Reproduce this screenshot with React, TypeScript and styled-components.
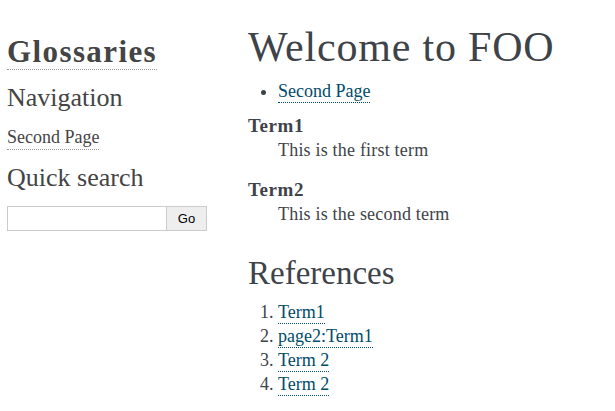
import React from "react";
import styled, { createGlobalStyle } from "styled-components";

const Global = createGlobalStyle`
  html, body { margin: 0; padding: 0; background: #fff; }
  body {
    font-family: "Liberation Serif", "Times New Roman", serif;
    color: #3E4349;
    font-size: 18px;
  }
`;

const Page = styled.div`
  display: grid;
  grid-template-columns: 241px 1fr;
  padding: 0 8px 0 7px;
`;

const Sidebar = styled.aside`
  display: flex;
  flex-direction: column;
  align-items: flex-start;
  padding-top: 35px;
`;

const LogoTitle = styled.h1`
  margin: 0;
  font-size: 31px;
  line-height: 34px;
  letter-spacing: 1.4px;
  font-weight: bold;
  color: #444;
`;

const SideLink = styled.a`
  color: #444;
  text-decoration: none;
  border-bottom: 1px dotted #999;
`;

const SideHeading = styled.h3<{ $gap: number }>`
  margin: ${(p) => p.$gap}px 0 0 0;
  font-size: 26px;
  line-height: 30px;
  font-weight: normal;
  color: #444;
`;

const SideList = styled.ul`
  list-style: none;
  margin: 12.7px 0 0 0;
  padding: 0;
  font-size: 18px;
  line-height: 24px;

  a {
    padding-bottom: 2px;
  }
`;

const SearchForm = styled.form`
  display: flex;
  margin-top: 13.8px;
  width: 200px;
`;

const SearchInput = styled.input`
  box-sizing: border-box;
  width: 160px;
  height: 25px;
  margin: 0;
  border: 1px solid #ccc;
  font-size: 13px;
  padding: 2px;
`;

const GoButton = styled.button`
  box-sizing: border-box;
  width: 41px;
  height: 25px;
  margin: 0 0 0 -1px;
  border: 1px solid #ccc;
  background: #eee;
  font-family: "Liberation Sans", Arial, sans-serif;
  font-size: 13px;
  color: #000;
  padding: 0;
`;

const Main = styled.main`
  padding-top: 23px;
`;

const Title = styled.h1`
  margin: 0;
  font-size: 42px;
  line-height: 48px;
  letter-spacing: 0.8px;
  font-weight: normal;
  color: #3E4349;
`;

const SubTitle = styled.h2`
  margin: 27.5px 0 0 0;
  font-size: 33px;
  line-height: 38px;
  font-weight: normal;
  color: #3E4349;
`;

const Link = styled.a`
  color: #004B6B;
  text-decoration: none;
  border-bottom: 1px dotted #004B6B;
  padding-bottom: 1px;
`;

const BulletList = styled.ul`
  margin: 8px 0 0 0;
  padding-left: 30px;
  line-height: 24px;
`;

const NumberList = styled.ol`
  margin: 8px 0 0 0;
  padding-left: 30px;
  line-height: 24px;
`;

const Glossary = styled.dl`
  margin: 11px 0 0 0;
  line-height: 24px;
`;

const Term = styled.dt<{ $first?: boolean }>`
  font-weight: bold;
  font-size: 19px;
  letter-spacing: 0.6px;
  margin-top: ${(p) => (p.$first ? 0 : 16)}px;
`;

const Definition = styled.dd`
  margin: 0 0 0 30px;
  letter-spacing: 0.2px;
`;

export default function App() {
  return (
    <>
      <Global />
      <Page>
        <Sidebar>
          <LogoTitle>
            <SideLink href="#">Glossaries</SideLink>
          </LogoTitle>
          <SideHeading $gap={13.7}>Navigation</SideHeading>
          <SideList>
            <li>
              <SideLink href="#">Second Page</SideLink>
            </li>
          </SideList>
          <SideHeading $gap={13.3}>Quick search</SideHeading>
          <SearchForm onSubmit={(e) => e.preventDefault()}>
            <SearchInput type="text" />
            <GoButton type="submit">Go</GoButton>
          </SearchForm>
        </Sidebar>
        <Main>
          <Title>Welcome to FOO</Title>
          <BulletList>
            <li>
              <Link href="#">Second Page</Link>
            </li>
          </BulletList>
          <Glossary>
            <Term $first>Term1</Term>
            <Definition>This is the first term</Definition>
            <Term>Term2</Term>
            <Definition>This is the second term</Definition>
          </Glossary>
          <SubTitle>References</SubTitle>
          <NumberList>
            <li><Link href="#">Term1</Link></li>
            <li><Link href="#">page2:Term1</Link></li>
            <li><Link href="#">Term 2</Link></li>
            <li><Link href="#">Term 2</Link></li>
          </NumberList>
        </Main>
      </Page>
    </>
  );
}
